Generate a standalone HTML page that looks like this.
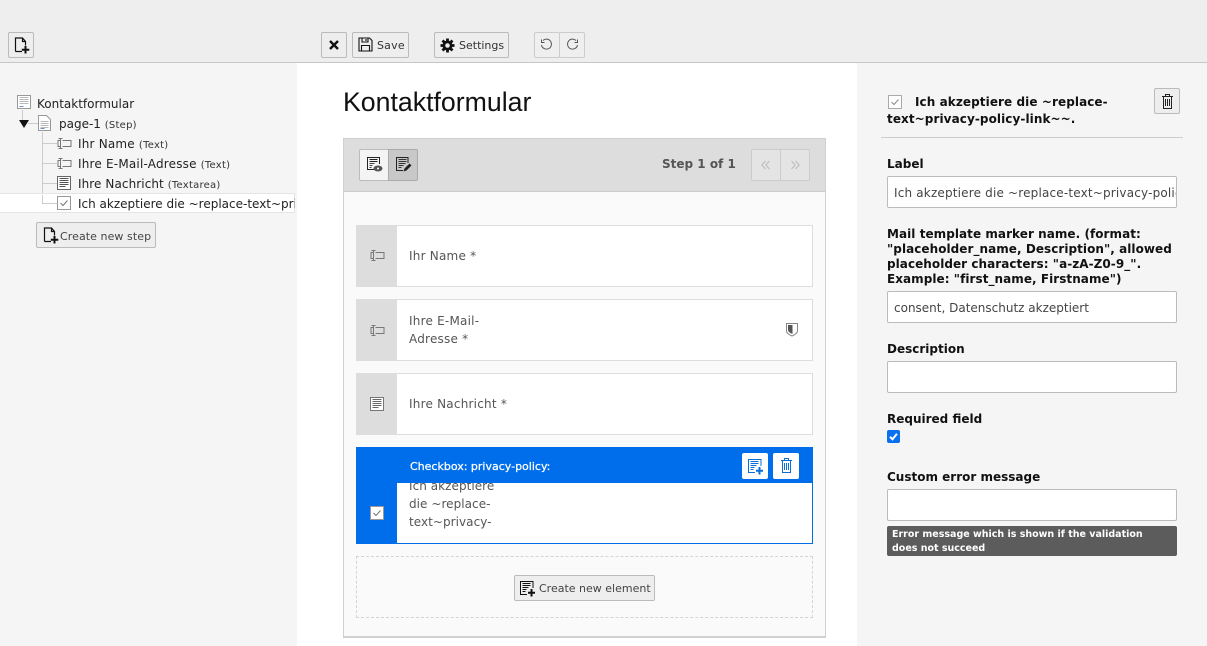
<!DOCTYPE html>
<html><head><meta charset="utf-8">
<style>
html,body{margin:0;padding:0}
body{width:1207px;height:646px;overflow:hidden;position:relative;background:#fff;font-family:"DejaVu Sans","Liberation Sans",sans-serif;color:#1a1a1a}
div,span,svg{position:absolute;box-sizing:border-box}
span.in{position:static}
.t{white-space:nowrap}
.btn{background:#eee;border:1px solid #bbb;border-radius:2px;height:26px;top:32px}
.bl{font-size:11px;color:#333;white-space:nowrap;letter-spacing:0}
.tree{font-size:12px;color:#222;white-space:nowrap;line-height:16px}
.tree small{font-size:10px;color:#333;letter-spacing:.25px}
.row{left:356px;width:457px;background:#fff;border:1px solid #ddd}
.side{left:356px;width:41px;background:#ddd}
.lab{left:409px;font-size:12px;line-height:18px;color:#555;white-space:nowrap;letter-spacing:.22px}
.fl{left:887px;font-size:12px;font-weight:bold;color:#111;white-space:nowrap;line-height:15px}
.inp{left:887px;width:290px;height:32px;background:#fff;border:1px solid #bbb;border-radius:2px;font-size:12px;color:#444;line-height:32px;padding-left:6px;white-space:nowrap;overflow:hidden}
</style></head><body>
<!-- panels -->
<div style="left:0;top:0;width:1207px;height:63px;background:#eee;border-bottom:1px solid #c6c6c6"></div>
<div style="left:0;top:63px;width:297px;height:583px;background:#f5f5f5"></div>
<div style="left:857px;top:63px;width:350px;height:583px;background:#f5f5f5"></div>

<!-- toolbar -->
<div class="btn" style="left:8px;width:26px"></div>
<svg style="left:14px;top:37px" width="17" height="17" viewBox="0 0 17 17" fill="none" stroke="#111" stroke-width="1.200"><path d="M1.500 14.500V1H8.500l3 3.500V8.500M1.500 14.500H8M8.500 1V4.500h3"/><path d="M11.500 9v7.500M7.800 12.800h7.500" stroke-width="2"/></svg>

<div class="btn" style="left:321px;width:26px"></div>
<svg style="left:329px;top:40px" width="10" height="10" viewBox="0 0 10 10"><path d="M1 1l8 8M9 1L1 9" stroke="#111" stroke-width="2.400"/></svg>
<div class="btn" style="left:352px;width:57px"></div>
<svg style="left:358px;top:37px" width="15" height="15" viewBox="0 0 15 15" fill="none" stroke="#111" stroke-width="1.100"><path d="M1 1h10.500L14 3.500V14H1zM4 1v4h6V1M8 2v2M3.500 14V8.500h8V14"/></svg>
<div class="bl" style="left:377px;top:39px;line-height:14px;letter-spacing:.2px">Save</div>
<div class="btn" style="left:434px;width:75px"></div>
<svg style="left:440px;top:38px" width="15" height="15" viewBox="0 0 15 15"><path d="M7.500 .5v14M.5 7.500h14M2.500 2.500l10 10M12.500 2.500l-10 10" stroke="#111" stroke-width="2.800"/><circle cx="7.500" cy="7.500" r="5" fill="#111"/><circle cx="7.500" cy="7.500" r="2.300" fill="#eee"/></svg>
<div class="bl" style="left:459px;top:39px;line-height:14px">Settings</div>
<div class="btn" style="left:534px;width:26px;background:#efefef;border-color:#ccc"></div>
<div class="btn" style="left:559px;width:26px;background:#efefef;border-color:#ccc"></div>
<svg style="left:540px;top:38px" width="13" height="13" viewBox="0 0 13 13" fill="none" stroke="#555"><path d="M3 2.500a5 5 0 1 1-1.500 4.500M1.500 1.500V4.500H4.500"/></svg>
<svg style="left:566px;top:38px" width="13" height="13" viewBox="0 0 13 13" fill="none" stroke="#555"><path d="M10 2.500a5 5 0 1 0 1.500 4.500M11.500 1.500V4.500H8.500"/></svg>

<!-- tree -->
<svg style="left:17px;top:95px" width="15" height="15" viewBox="0 0 15 15"><rect x=".5" y=".5" width="13" height="13" fill="#fff" stroke="#999"/><path d="M2.500 2.500h9M2.500 4.500h9M2.500 6.500h9M2.500 8.500h9" stroke="#bbb"/><path d="M2.500 11.500h4" stroke="#6a8fc0"/></svg>
<div class="tree" style="left:37px;top:96px">Kontaktformular</div>
<svg style="left:0;top:0" width="297" height="240" fill="none" stroke="#ccc"><path d="M22.500 110v14M28 123.500H38M42.500 132V203.500H57M42.500 143.500H57M42.500 163.500H57M42.500 183.500H57"/></svg>
<svg style="left:19px;top:120px" width="10" height="8" viewBox="0 0 10 8"><path d="M0 0h10L5 8z" fill="#111"/></svg>
<svg style="left:38px;top:115px" width="13" height="16" viewBox="0 0 13 16"><path d="M.5.500h8l4 4V15.500H.5z" fill="#fff" stroke="#999"/><path d="M2.500 6.500h8M2.500 8.500h8M2.500 10.500h8M2.500 12.500h8" stroke="#bbb"/><path d="M2.500 13.500h4" stroke="#6a8fc0"/></svg>
<div class="tree" style="left:59px;top:116px">page-1 <small>(Step)</small></div>
<svg style="left:57px;top:138px" width="15" height="11" viewBox="0 0 15 11" fill="none" stroke="#777"><path d="M5.500 2.500H14V8.500H5.500M1.500.5h4M3.500.5v10M1.500 10.500h4M3 2.500H1v6h2"/></svg>
<div class="tree" style="left:78px;top:136px;letter-spacing:.2px">Ihr Name <small>(Text)</small></div>
<svg style="left:57px;top:158px" width="15" height="11" viewBox="0 0 15 11" fill="none" stroke="#777"><path d="M5.500 2.500H14V8.500H5.500M1.500.5h4M3.500.5v10M1.500 10.500h4M3 2.500H1v6h2"/></svg>
<div class="tree" style="left:78px;top:156px;letter-spacing:.2px">Ihre E-Mail-Adresse <small>(Text)</small></div>
<svg style="left:57px;top:176px" width="14" height="14" viewBox="0 0 14 14"><rect x=".5" y=".5" width="13" height="13" fill="#fff" stroke="#666"/><path d="M2.500 2.500h9M2.500 4.500h9M2.500 6.500h9M2.500 8.500h9M2.500 10.500h6" stroke="#555"/></svg>
<div class="tree" style="left:78px;top:176px;letter-spacing:.08px">Ihre Nachricht <small>(Textarea)</small></div>
<div style="left:0;top:193px;width:295px;height:20px;background:#fff;border:1px solid #e4e4e4;border-left:0"></div>
<svg style="left:42px;top:195px" width="16" height="10" fill="none" stroke="#ccc"><path d="M.5 0V8.500H15"/></svg>
<svg style="left:57px;top:196px" width="14" height="14" viewBox="0 0 14 14" fill="none"><rect x=".5" y=".5" width="13" height="13" fill="#fff" stroke="#999"/><path d="M3.500 7l2.500 2.500 4.500-5" stroke="#777"/></svg>
<div class="tree" style="left:78px;top:196px;width:217px;overflow:hidden">Ich akzeptiere die ~replace-text~privacy-policy-link~~.</div>
<div class="btn" style="left:36px;top:222px;width:120px"></div>
<svg style="left:43px;top:227px" width="17" height="17" viewBox="0 0 17 17" fill="none" stroke="#111" stroke-width="1.200"><path d="M1.500 14.500V1H8.500l3 3.500V8.500M1.500 14.500H8M8.500 1V4.500h3"/><path d="M11.500 9v7.500M7.800 12.800h7.500" stroke-width="2"/></svg>
<div class="bl" style="left:60px;top:230px;line-height:14px;color:#444;letter-spacing:.07px">Create new step</div>

<!-- center -->
<div class="t" style="left:343px;top:85px;font-family:'Liberation Sans',sans-serif;font-size:26.700px;line-height:34px;color:#111">Kontaktformular</div>
<div style="left:343px;top:138px;width:483px;height:500px;background:#fafafa;border:1px solid #d0d0d0;border-bottom:2px solid #d0d0d0"></div>
<div style="left:344px;top:139px;width:481px;height:53px;background:#ddd;border-bottom:1px solid #ccc"></div>
<div style="left:359px;top:149px;width:30px;height:32px;background:#f4f4f4;border:1px solid #bbb;border-radius:2px 0 0 2px"></div>
<div style="left:388px;top:149px;width:30px;height:32px;background:#c8c8c8;border:1px solid #aaa;border-radius:0 2px 2px 0"></div>
<svg style="left:367px;top:157px" width="16" height="16" viewBox="0 0 16 16"><path d="M9 12.500H.5V.5h12V7" fill="none" stroke="#222"/><path d="M2.500 2.500h8M2.500 4.500h8" stroke="#222"/><path d="M2.500 6.500h5M2.500 8.500h3M2.500 10.500h2" stroke="#444"/><ellipse cx="11" cy="11.500" rx="4.500" ry="3" fill="#555"/><circle cx="11" cy="11.500" r="1" fill="#fff"/></svg>
<svg style="left:396px;top:157px" width="16" height="16" viewBox="0 0 16 16"><path d="M7 13.500H.5V.5h11.500V6" fill="none" stroke="#222"/><path d="M2.500 2.500h8M2.500 4.500h8M2.500 6.500h7M2.500 8.500h5M2.500 10.500h3" stroke="#333"/><path d="M7.500 14.500l1-3 5-5 2 2-5 5z" fill="#222"/></svg>
<div class="t" style="left:662px;top:156px;font-size:12px;font-weight:bold;color:#555;line-height:16px">Step 1 of 1</div>
<div style="left:751px;top:149px;width:30px;height:32px;background:#e4e4e4;border:1px solid #ccc;border-radius:2px 0 0 2px"></div>
<div style="left:780px;top:149px;width:30px;height:32px;background:#e4e4e4;border:1px solid #ccc;border-radius:0 2px 2px 0"></div>
<svg style="left:761px;top:160px" width="10" height="10" viewBox="0 0 10 10" fill="none" stroke="#bbb"><path d="M4.500 1L.8 5l3.700 4M8.500 1L4.800 5l3.700 4"/></svg>
<svg style="left:790px;top:160px" width="10" height="10" viewBox="0 0 10 10" fill="none" stroke="#bbb"><path d="M1.500 1l3.700 4-3.700 4M5.500 1l3.700 4-3.700 4"/></svg>

<!-- row1 -->
<div class="row" style="top:225px;height:62px"></div><div class="side" style="top:225px;height:62px"></div>
<svg style="left:370px;top:250px" width="15" height="11" viewBox="0 0 15 11" fill="none" stroke="#777"><path d="M5.500 2.500H14V8.500H5.500M1.500.5h4M3.500.5v10M1.500 10.500h4M3 2.500H1v6h2"/></svg>
<div class="lab" style="top:247px">Ihr Name *</div>
<!-- row2 -->
<div class="row" style="top:299px;height:62px"></div><div class="side" style="top:299px;height:62px"></div>
<svg style="left:370px;top:325px" width="15" height="11" viewBox="0 0 15 11" fill="none" stroke="#777"><path d="M5.500 2.500H14V8.500H5.500M1.500.5h4M3.500.5v10M1.500 10.500h4M3 2.500H1v6h2"/></svg>
<div class="lab" style="top:312px">Ihre E-Mail-<br>Adresse *</div>
<svg style="left:785px;top:322px" width="14" height="15" viewBox="0 0 14 15"><path d="M1.500 1.500h11V9c0 2-3 4-5.500 5-2.500-1-5.500-3-5.500-5z" fill="#fff" stroke="#888"/><path d="M3 3h4.500v9C5 11 3 9.500 3 8z" fill="#555"/></svg>
<!-- row3 -->
<div class="row" style="top:373px;height:62px"></div><div class="side" style="top:373px;height:62px"></div>
<svg style="left:370px;top:397px" width="14" height="14" viewBox="0 0 14 14"><rect x=".5" y=".5" width="13" height="13" fill="#fff" stroke="#777"/><path d="M2.500 2.500h9M2.500 4.500h9M2.500 6.500h9M2.500 8.500h9M2.500 10.500h6" stroke="#666"/></svg>
<div class="lab" style="top:395px">Ihre Nachricht *</div>
<!-- row4 -->
<div class="row" style="top:447px;height:97px;border-color:#006ee8"></div>
<div class="lab" style="top:477px;letter-spacing:.05px">Ich akzeptiere<br>die ~replace-<br>text~privacy-</div>
<div class="side" style="top:447px;height:97px;background:#006eeb"></div>
<div style="left:356px;top:447px;width:457px;height:36px;background:#006eeb"></div>
<svg style="left:370px;top:506px" width="14" height="14" viewBox="0 0 14 14" fill="none"><rect x=".5" y=".5" width="13" height="13" fill="#fff" stroke="#999"/><path d="M3.500 7l2.500 2.500 4.500-5" stroke="#777"/></svg>
<div class="t" style="left:410px;top:459px;font-size:11px;line-height:16px;color:#fff;-webkit-text-stroke:.25px #fff">Checkbox: privacy-policy:</div>
<div style="left:742px;top:453px;width:26px;height:26px;background:#fff;border-radius:2px"></div>
<div style="left:773px;top:453px;width:26px;height:26px;background:#fff;border-radius:2px"></div>
<svg style="left:747px;top:458px" width="17" height="17" viewBox="0 0 17 17" fill="none" stroke="#0a6fd8"><path d="M8 14.500H1.500V1.500H14V8"/><path d="M3.500 3.500h8M3.500 5.500h8M3.500 7.500h6M3.500 9.500h4M3.500 11.500h3"/><path d="M12.500 9v7.500M9 12.800h7" stroke-width="2"/></svg>
<svg style="left:781px;top:458px" width="11" height="15" viewBox="0 0 11 15" fill="none" stroke="#0a6fd8"><path d="M0 2.500h11M3.500 2.500V.5h4v2M1.500 2.500V14.500h8V2.500M3.500 5v7M5.500 5v7M7.500 5v7"/></svg>
<!-- drop -->
<div style="left:356px;top:556px;width:457px;height:62px;border:1px dashed #d4d4d4"></div>
<div class="btn" style="left:514px;top:575px;width:141px;background:#eee"></div>
<svg style="left:520px;top:581px" width="16" height="16" viewBox="0 0 16 16" fill="none" stroke="#111"><path d="M7 13.500H.5V.5H13V7"/><path d="M2.500 2.500h8M2.500 4.500h8M2.500 6.500h6M2.500 8.500h4M2.500 10.500h3"/><path d="M11.500 8v7.500M8 11.800h7" stroke-width="2"/></svg>
<div class="bl" style="left:539px;top:582px;line-height:14px;color:#444">Create new element</div>

<!-- right -->
<svg style="left:888px;top:95px" width="14" height="14" viewBox="0 0 14 14" fill="none"><rect x=".5" y=".5" width="13" height="13" fill="#fff" stroke="#aaa"/><path d="M3.500 7l2.500 2.500 4.500-5" stroke="#888"/></svg>
<div class="t" style="left:915px;top:94px;font-size:12px;font-weight:bold;line-height:16px;color:#111;letter-spacing:.08px">Ich akzeptiere die ~replace-</div>
<div class="t" style="left:887px;top:111px;font-size:12px;font-weight:bold;line-height:16px;color:#111;letter-spacing:.08px">text~privacy-policy-link~~.</div>
<div class="btn" style="left:1154px;top:88px;width:26px;background:#eee"></div>
<svg style="left:1162px;top:94px" width="11" height="15" viewBox="0 0 11 15" fill="none" stroke="#222"><path d="M0 2.500h11M3.500 2.500V.5h4v2M1.500 2.500V14.500h8V2.500M3.500 5v7M5.500 5v7M7.500 5v7"/></svg>
<div style="left:881px;top:137px;width:302px;height:1px;background:#ccc"></div>
<div class="fl" style="top:157px">Label</div>
<div class="inp" style="top:176px;letter-spacing:.18px"><span class="in" style="position:static">Ich akzeptiere die ~replace-text~privacy-policy-link~~.</span></div>
<div class="fl" style="top:227px;letter-spacing:.05px">Mail template marker name. (format:<br>"placeholder_name, Description", allowed<br>placeholder characters: "a-zA-Z0-9_".<br>Example: "first_name, Firstname")</div>
<div class="inp" style="top:291px">consent, Datenschutz akzeptiert</div>
<div class="fl" style="top:342px">Description</div>
<div class="inp" style="top:361px"></div>
<div class="fl" style="top:412px">Required field</div>
<div style="left:887px;top:430px;width:13px;height:13px;background:#0a6ff0;border-radius:2px"></div>
<svg style="left:887px;top:430px" width="13" height="13" viewBox="0 0 13 13" fill="none"><path d="M3 6.800l2.500 2.500L10 3.800" stroke="#fff" stroke-width="2"/></svg>
<div class="fl" style="top:470px">Custom error message</div>
<div class="inp" style="top:489px"></div>
<div style="left:887px;top:526px;width:290px;height:30px;background:#5c5c5c;border-radius:2px;color:#fff;font-size:9.500px;font-weight:bold;line-height:14px;padding:2px 5px 0;white-space:nowrap;overflow:hidden">Error message which is shown if the validation<br>does not succeed</div>
</body></html>
